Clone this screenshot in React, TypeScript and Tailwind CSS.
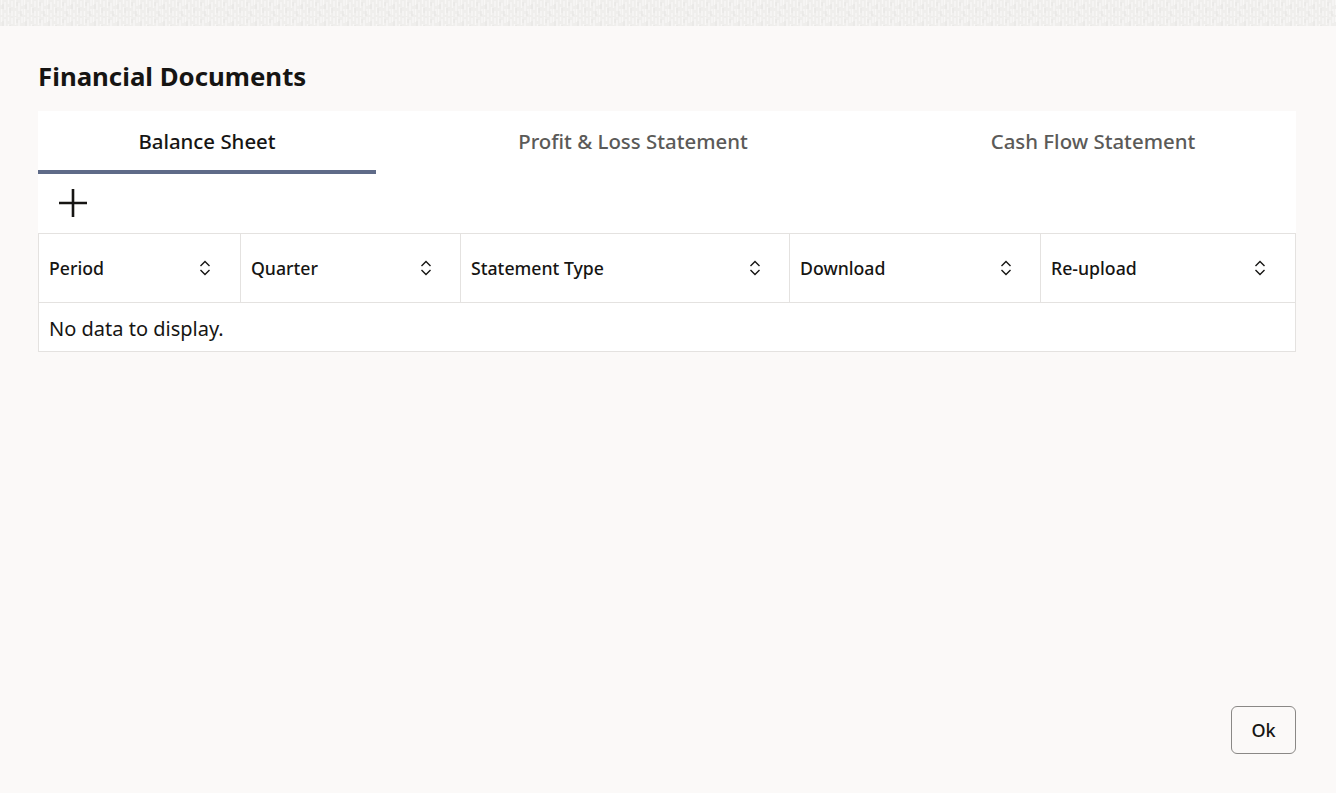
import React from "react";

const columns = [
  { label: "Period", width: "w-[202px]", iconRight: "pr-[29px]" },
  { label: "Quarter", width: "w-[220px]", iconRight: "pr-[28px]" },
  { label: "Statement Type", width: "w-[329px]", iconRight: "pr-[28px]" },
  { label: "Download", width: "w-[251px]", iconRight: "pr-[28px]" },
  { label: "Re-upload", width: "flex-1", iconRight: "pr-[29px]" },
];

function SortIcon() {
  return (
    <svg width="12" height="16" viewBox="0 0 12 16" fill="none" stroke="#161513" strokeWidth="1.4">
      <path d="M1.5 6 L6 1.5 L10.5 6" />
      <path d="M1.5 10 L6 14.5 L10.5 10" />
    </svg>
  );
}

function Texture() {
  return (
    <svg width="100%" height="26" className="block">
      <defs>
        <pattern id="weave" width="23" height="17" patternUnits="userSpaceOnUse">
          <rect width="23" height="17" fill="#efeeec" />
          <path
            d="M1.5 0v5M1.5 9v6M5 2v8M5 13v4M8.5 0v4M8.5 7v8M12 1v6M12 11v5M15.5 0v8M15.5 11v5M19 3v8M19 14v3M22 0v6M22 9v5"
            stroke="#f8f7f6"
            strokeWidth="1.5"
          />
          <path d="M3 4v5M10 8v5M17 2v4M21 11v5" stroke="#e6e4e2" strokeWidth="1" />
        </pattern>
      </defs>
      <rect width="100%" height="26" fill="url(#weave)" />
    </svg>
  );
}

export default function App() {
  return (
    <div className="h-[793px] w-full bg-[#fbf9f8] flex flex-col font-['Noto_Sans',sans-serif] text-[#161513] overflow-hidden">
      <Texture />
      <div className="flex-1 flex flex-col pl-[38px] pr-[40px] min-h-0">
        <h1 className="mt-[30px] h-[40px] flex items-center text-[25.8px] leading-[40px] font-bold">
          Financial Documents
        </h1>
        <div className="mt-[15px] bg-white">
          <div className="flex h-[63px]">
            <div className="w-[338px] flex items-center justify-center pt-[2px] border-b-4 border-[#5f6b88] text-[20.4px] font-medium">
              Balance Sheet
            </div>
            <div className="w-[514px] flex items-center justify-center pb-[2px] text-[20.4px] font-medium text-[#5b5a58]">
              Profit &amp; Loss Statement
            </div>
            <div className="flex-1 flex items-center justify-center pb-[2px] text-[20.4px] font-medium text-[#5b5a58]">
              Cash Flow Statement
            </div>
          </div>
          <div className="h-[59px] flex items-center pl-[21px] pb-[2px]">
            <svg width="28" height="28" viewBox="0 0 28 28" stroke="#161513" strokeWidth="2.6" fill="none">
              <path d="M14 0v28M0 14h28" />
            </svg>
          </div>
          <div className="border border-[#e4e2e0]">
            <div className="flex h-[69px] border-b border-[#e4e2e0]">
              {columns.map((col, i) => (
                <div
                  key={col.label}
                  className={`${col.width} ${col.iconRight} flex items-center justify-between pl-[10px] text-[17.7px] font-medium ${
                    i < columns.length - 1 ? "border-r border-[#e4e2e0]" : ""
                  }`}
                >
                  <span>{col.label}</span>
                  <SortIcon />
                </div>
              ))}
            </div>
            <div className="h-[48px] flex items-center pl-[10px] pt-[3px] text-[20px]">No data to display.</div>
          </div>
        </div>
        <div className="mt-auto mb-[39px] flex justify-end">
          <button className="w-[65px] h-[48px] rounded-[6px] border border-[#8a8886] text-[18px] font-medium">
            Ok
          </button>
        </div>
      </div>
    </div>
  );
}
